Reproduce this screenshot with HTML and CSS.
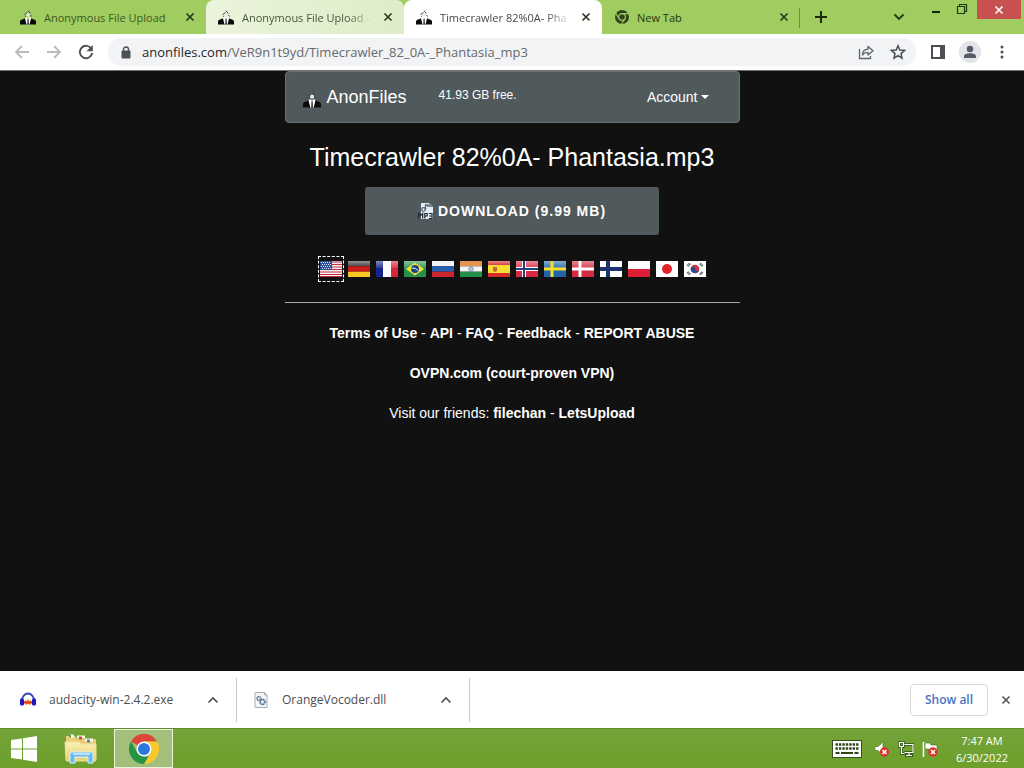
FILE: index.html
```html
<!DOCTYPE html>
<html lang="en">
<head>
<meta charset="utf-8">
<title>Timecrawler 82%0A- Phantasia.mp3 - AnonFiles</title>
<link rel="stylesheet" href="styles.css">
</head>
<body>
<svg class="defs" aria-hidden="true">
  <symbol id="anon" viewBox="0 0 16 16">
    <path d="M0 15.500v-3q0-1.500 2-2l4-1.500h4l4 1.500q2 .5 2 2v3z" fill="#080b08"/>
    <path d="M6 8l2 1 2-1 1 1.500-1.500 6h-3L5 9.500z" fill="#fff"/>
    <path d="M7.600 9.500h.9l.4 6H7.300z" fill="#222"/>
    <path d="M6 5l1.500-1.500L10 5l-.6 2.500H6.800z" fill="#e2e8e4"/>
    <path d="M4.500 5.500L7.500 3.500M9 3l1.500 1.500M10.500 6l1 1.500M8 1.500l1 1.500M5 7l1 .5" stroke="#414c45" stroke-width="1" fill="none"/>
  </symbol>
  <symbol id="x" viewBox="0 0 10 10"><path d="M1.500 1.500l7 7M8.500 1.500l-7 7" fill="none" stroke="currentColor" stroke-width="1.600"/></symbol>
  <symbol id="up" viewBox="0 0 12 8"><path d="M1.500 6.500L6 2l4.500 4.500" fill="none" stroke="currentColor" stroke-width="1.600"/></symbol>
  <symbol id="redx" viewBox="0 0 10 10"><circle cx="5" cy="5" r="4.700" fill="#d8362c"/><path d="M3 3l4 4M7 3L3 7" stroke="#fff" stroke-width="1.600"/></symbol>
  <linearGradient id="gloss" x2="0" y2="1"><stop offset="0" stop-color="#fff" stop-opacity=".45"/><stop offset="1" stop-color="#fff" stop-opacity=".1"/></linearGradient>
  <linearGradient id="folder" x2="0" y2="1"><stop offset="0" stop-color="#faf0b4"/><stop offset="1" stop-color="#e8cf72"/></linearGradient>
</svg>

<header class="tabstrip">
  <div class="tabs">
    <div class="tab first"><svg class="favicon"><use href="#anon"/></svg><span class="tab-title">Anonymous File Upload</span><button class="close" aria-label="Close tab"><svg><use href="#x"/></svg></button></div>
    <div class="tab hovered"><svg class="favicon"><use href="#anon"/></svg><span class="tab-title">Anonymous File Upload -</span><button class="close" aria-label="Close tab"><svg><use href="#x"/></svg></button></div>
    <div class="tab active"><svg class="favicon"><use href="#anon"/></svg><span class="tab-title">Timecrawler 82%0A- Pha</span><button class="close" aria-label="Close tab"><svg><use href="#x"/></svg></button></div>
    <div class="tab last"><svg class="favicon globe" viewBox="0 0 16 16"><circle cx="8" cy="8" r="7" fill="#2f4420"/><circle cx="8" cy="8" r="3.400" fill="none" stroke="#a1cc60" stroke-width="1.200"/><path d="M8 4.600h7M5 9.700L1.700 4M11 9.700L7.500 15" stroke="#a1cc60" stroke-width="1.100"/></svg><span class="tab-title">New Tab</span><button class="close" aria-label="Close tab"><svg><use href="#x"/></svg></button></div>
    <button class="newtab" aria-label="New tab"><svg viewBox="0 0 14 14"><path d="M7 1v12M1 7h12" stroke="#1c2b0c" stroke-width="2"/></svg></button>
  </div>
  <div class="window-controls">
    <button class="search-tabs" aria-label="Search tabs"><svg viewBox="0 0 12 8"><path d="M1.500 1.500L6 6l4.500-4.500" fill="none" stroke="#24360f" stroke-width="1.800"/></svg></button>
    <button class="win" aria-label="Minimize"><svg viewBox="0 0 12 12"><path d="M2 9h8" stroke="#16210a" stroke-width="2"/></svg></button>
    <button class="win" aria-label="Restore"><svg viewBox="0 0 12 12"><path d="M1.500 3.500h7v7h-7zM3.500 3V1.500h7v7H9" fill="none" stroke="#24360f" stroke-width="1.200"/></svg></button>
    <button class="win-close" aria-label="Close window"><svg><use href="#x"/></svg></button>
  </div>
</header>

<nav class="toolbar" aria-label="Browser">
  <button class="tool" aria-label="Back"><svg viewBox="0 0 16 16"><path d="M15 8H2M8 2L2 8l6 6" fill="none" stroke="#b9bbbe" stroke-width="1.800"/></svg></button>
  <button class="tool" aria-label="Forward"><svg viewBox="0 0 16 16"><path d="M1 8h13M8 2l6 6-6 6" fill="none" stroke="#b9bbbe" stroke-width="1.800"/></svg></button>
  <button class="tool" aria-label="Reload"><svg viewBox="0 0 16 16"><path d="M13.500 5A6.200 6.200 0 1 0 14.200 9" fill="none" stroke="#4c4f54" stroke-width="1.900"/><path d="M14.800 1v6.300H8.500z" fill="#4c4f54"/></svg></button>
  <div class="omnibox">
    <svg class="lock" viewBox="0 0 10 13"><rect x=".5" y="4.500" width="9" height="8" rx="1" fill="#4c4f54"/><path d="M2.500 5V3.500a2.500 2.500 0 0 1 5 0V5" fill="none" stroke="#4c4f54" stroke-width="1.400"/></svg>
    <a class="url" href="#"><span class="host">anonfiles.com</span>/VeR9n1t9yd/Timecrawler_82_0A-_Phantasia_mp3</a>
    <button class="tool" aria-label="Share"><svg viewBox="0 0 16 16"><path d="M1.500 5v9.500h11V12" fill="none" stroke="#5f6368" stroke-width="1.300"/><path d="M4.500 11c0-4 2-5.500 5.500-5.800V2.500l5 4.300-5 4.200V8.300C7 8.300 5.700 9 4.500 11z" fill="none" stroke="#5f6368" stroke-width="1.300" stroke-linejoin="round"/></svg></button>
    <button class="tool" aria-label="Bookmark"><svg viewBox="0 0 16 16"><path d="M8 1.800l1.800 4.300 4.700.4L11 9.600l1 4.600-4-2.500-4 2.500 1-4.600-3.500-3.100 4.700-.4z" fill="none" stroke="#4c4f54" stroke-width="1.500"/></svg></button>
  </div>
  <button class="tool" aria-label="Side panel"><svg viewBox="0 0 16 16"><path d="M1 1h14v14H1zM3 3v10h7V3z" fill="#4c4f54" fill-rule="evenodd"/></svg></button>
  <button class="tool avatar" aria-label="Profile"><svg viewBox="0 0 22 22"><circle cx="11" cy="11" r="11" fill="#e2e4ea"/><circle cx="11" cy="8" r="3.200" fill="#555b68"/><path d="M5 17v-1.500c0-2.500 3.500-3.200 6-3.200s6 .7 6 3.200V17z" fill="#555b68"/></svg></button>
  <button class="tool" aria-label="Menu"><svg viewBox="0 0 16 16" fill="#4c4f54"><circle cx="8" cy="3" r="1.500"/><circle cx="8" cy="8" r="1.500"/><circle cx="8" cy="13" r="1.500"/></svg></button>
</nav>

<main class="page">
  <div class="content">
    <div class="navbar">
      <a class="brand" href="#"><svg class="brand-icon"><use href="#anon"/></svg>AnonFiles</a>
      <span class="quota">41.93 GB free.</span>
      <button class="account">Account<span class="caret"></span></button>
    </div>
    <h1 class="filename">Timecrawler 82%0A- Phantasia.mp3</h1>
    <a class="download" href="#"><svg viewBox="0 0 15 16"><path d="M3 0h8l4 4v12H3z" fill="#e4edf4"/><path d="M11 0v4h4z" fill="#71838e"/><circle cx="5.500" cy="6.500" r="1.800" fill="none" stroke="#4d6272" stroke-width="1.200"/><path d="M7.500 6.500V2h2.500v2" stroke="#4d6272" stroke-width="1.300" fill="none"/><path d="M.7 15.500v-5l2 2 2-2v5M6.800 15.500v-5h2.400v2.500H7M10.800 10.500H14v5h-3.200M11 13h3" stroke="#1d2a34" stroke-width="1.200" fill="none"/></svg>Download (9.99 MB)</a>
    <div class="flags">
      <a class="flag selected" href="#" aria-label="English"><svg viewBox="0 0 22 16"><path d="M0 0h22v16H0z" fill="#f4eef0"/><path d="M0 1h22M0 3.500h22M0 6h22M0 8.500h22M0 11h22M0 13.500h22M0 15.500h22" stroke="#c32e43" stroke-width="1.200"/><path d="M0 0h12v9H0z" fill="#315197"/><path d="M1 1.500h10M2 3.500h9M1 5.500h10M2 7.500h9" stroke="#d6e1f4" stroke-width="1" stroke-dasharray="1 1"/></svg></a>
      <a class="flag" href="#" aria-label="Deutsch"><svg viewBox="0 0 22 16"><path d="M0 0h22v5.300H0z" fill="#3a3a3a"/><path d="M0 5.300h22v5.400H0z" fill="#cc1c18"/><path d="M0 10.700h22V16H0z" fill="#f8c726"/><path d="M0 0h22v5H0z" fill="url(#gloss)"/></svg></a>
      <a class="flag" href="#" aria-label="Français"><svg viewBox="0 0 22 16"><path d="M0 0h7v16H0z" fill="#18248b"/><path d="M7 0h8v16H7z" fill="#fff"/><path d="M15 0h7v16h-7z" fill="#d92636"/><path d="M0 0h22v7H0z" fill="url(#gloss)"/></svg></a>
      <a class="flag" href="#" aria-label="Português"><svg viewBox="0 0 22 16"><path d="M0 0h22v16H0z" fill="#26924b"/><path d="M0 0h22v7H0z" fill="url(#gloss)"/><path d="M11 1.500L20 8l-9 6.500L2 8z" fill="#f5e332"/><circle cx="11" cy="8" r="4" fill="#1e4686"/><path d="M7.300 7q4-.5 7 2.500" stroke="#dcebf5" fill="none"/></svg></a>
      <a class="flag" href="#" aria-label="Русский"><svg viewBox="0 0 22 16"><path d="M0 0h22v5.300H0z" fill="#f4f4f4"/><path d="M0 5.300h22v5.400H0z" fill="#255fb2"/><path d="M0 10.700h22V16H0z" fill="#cd252c"/></svg></a>
      <a class="flag" href="#" aria-label="हिन्दी"><svg viewBox="0 0 22 16"><path d="M0 0h22v5.300H0z" fill="#e99352"/><path d="M0 5.300h22v5.400H0z" fill="#f5f5f5"/><path d="M0 10.700h22V16H0z" fill="#23904a"/><circle cx="11" cy="8" r="2.200" fill="#b7c8df" stroke="#6c83a9" stroke-width=".8"/></svg></a>
      <a class="flag" href="#" aria-label="Español"><svg viewBox="0 0 22 16"><path d="M0 0h22v16H0z" fill="#d8292b"/><path d="M0 4h22v8H0z" fill="#f8dd35"/><path d="M0 0h22v4H0z" fill="url(#gloss)"/><path d="M5 6h4v4l-2 1-2-1z" fill="#c46636"/></svg></a>
      <a class="flag" href="#" aria-label="Norsk"><svg viewBox="0 0 22 16"><path d="M0 0h22v16H0z" fill="#d82b41"/><path d="M0 0h22v7H0z" fill="url(#gloss)"/><path d="M8 0v16M0 8h22" stroke="#fff" stroke-width="4"/><path d="M8 0v16M0 8h22" stroke="#233f7c" stroke-width="2"/></svg></a>
      <a class="flag" href="#" aria-label="Svenska"><svg viewBox="0 0 22 16"><path d="M0 0h22v16H0z" fill="#1f67a8"/><path d="M0 0h22v7H0z" fill="url(#gloss)"/><path d="M8 0v16M0 8h22" stroke="#f7df2c" stroke-width="3"/></svg></a>
      <a class="flag" href="#" aria-label="Dansk"><svg viewBox="0 0 22 16"><path d="M0 0h22v16H0z" fill="#d32b42"/><path d="M0 0h22v7H0z" fill="url(#gloss)"/><path d="M8 0v16M0 8h22" stroke="#fff" stroke-width="3"/></svg></a>
      <a class="flag" href="#" aria-label="Suomi"><svg viewBox="0 0 22 16"><path d="M0 0h22v16H0z" fill="#fff"/><path d="M8 0v16M0 8h22" stroke="#1e326f" stroke-width="4"/></svg></a>
      <a class="flag" href="#" aria-label="Polski"><svg viewBox="0 0 22 16"><path d="M0 0h22v8H0z" fill="#fff"/><path d="M0 8h22v8H0z" fill="#dc1f35"/></svg></a>
      <a class="flag" href="#" aria-label="日本語"><svg viewBox="0 0 22 16"><path d="M0 0h22v16H0z" fill="#fff"/><circle cx="11" cy="8" r="5" fill="#e02326"/></svg></a>
      <a class="flag" href="#" aria-label="한국어"><svg viewBox="0 0 22 16"><path d="M0 0h22v16H0z" fill="#fff"/><circle cx="11" cy="8" r="4.300" fill="#d63340"/><path d="M6.800 7a2.200 2.200 0 0 1 4.200 1 2.200 2.200 0 0 0 4.200.8A4.300 4.300 0 0 1 6.800 7z" fill="#244a91"/><path d="M3.500 5l2.500-2.500M3.500 11L6 13.500M16 2.500L18.500 5M16 13.500l2.500-2.500" stroke="#666" stroke-width="2.400" stroke-dasharray="1.500 .5"/></svg></a>
    </div>
    <footer class="links">
      <p><a href="#">Terms of Use</a> - <a href="#">API</a> - <a href="#">FAQ</a> - <a href="#">Feedback</a> - <a href="#">REPORT ABUSE</a></p>
      <p><a href="#">OVPN.com (court-proven VPN)</a></p>
      <p>Visit our friends: <a href="#">filechan</a> - <a href="#">LetsUpload</a></p>
    </footer>
  </div>
</main>

<section class="shelf" aria-label="Downloads">
  <div class="item"><svg class="file-icon" viewBox="0 0 16 16"><path d="M2 8.500a6 7 0 0 1 12 0" fill="none" stroke="#3d43bd" stroke-width="1.800"/><rect x="0" y="6.500" width="4" height="7" rx="1.500" fill="#2016c8"/><rect x="12" y="6.500" width="4" height="7" rx="1.500" fill="#2016c8"/><path d="M4 10l1-2 1.500 1L8 7l1.500 2L11 8l1 2-1 2-1 1-2-1-2 1z" fill="#f38b22"/><path d="M4 10.500h8" stroke="#d9351d" stroke-width="1.800"/></svg><span class="file-name">audacity-win-2.4.2.exe</span><button class="more" aria-label="Options for audacity-win-2.4.2.exe"><svg><use href="#up"/></svg></button></div>
  <div class="item"><svg class="file-icon" viewBox="0 0 16 16"><path d="M2 .5h9.500L14 3v12.500H2z" fill="#f3f7f9" stroke="#a5adb2"/><path d="M11.500.5V3H14" fill="none" stroke="#a5adb2"/><circle cx="6" cy="6.500" r="2" fill="#dce9f1" stroke="#4a6780" stroke-width="1.400" stroke-dasharray="1.300 .5"/><circle cx="9.500" cy="10" r="2.500" fill="#dce9f1" stroke="#4a6780" stroke-width="1.500" stroke-dasharray="1.500 .5"/></svg><span class="file-name">OrangeVocoder.dll</span><button class="more" aria-label="Options for OrangeVocoder.dll"><svg><use href="#up"/></svg></button></div>
  <div class="shelf-actions"><button class="show-all">Show all</button><button class="shelf-close" aria-label="Close downloads"><svg><use href="#x"/></svg></button></div>
</section>

<footer class="taskbar">
  <button class="start" aria-label="Start"><svg viewBox="0 0 26 26"><path d="M0 4l11-1.600V12.500H0zM12 2.200L26 0v12.500H12zM0 13.500h11v10L0 22zM12 13.500h14V26l-14-2.200z" fill="#fff"/></svg></button>
  <button class="explorer" aria-label="File Explorer"><svg viewBox="0 0 34 30"><path d="M2 2h9l2 3h18q1 0 1 1v20q0 1-1 1H3q-1 0-1-1z" fill="#e9cd79"/><path d="M5 2h5M13 3h8M21 6h8" stroke="#fffbea" stroke-width="3"/><path d="M5 2h2" stroke="#46a54f" stroke-width="3"/><path d="M15 4h3" stroke="#d34a35" stroke-width="3"/><path d="M23 7h3" stroke="#468dc8" stroke-width="3"/><path d="M1 8h14l2 2h15v16q0 1-1 1H3q-1 0-1-1z" fill="url(#folder)" stroke="#efe0a0"/><path d="M6 29V20q0-2 2-2h19q2 0 2 2v9h-5v-6H11v6z" fill="#6bbbe8" stroke="#d8f2fd"/><path d="M9 20h17" stroke="#d7f0fb" stroke-width="1.500"/></svg></button>
  <button class="running" aria-label="Google Chrome"><svg viewBox="0 0 30 30"><path d="M15 15L2 7.500A15 15 0 0 1 28 7.500H15z" fill="#dd4536"/><path d="M15 7.500h13A15 15 0 0 1 15 30l6.500-11.200z" fill="#f9c72e"/><path d="M2 7.500l6.500 11.300L15 22.500h4.400L15 30A15 15 0 0 1 2 7.500z" fill="#279347"/><circle cx="15" cy="15" r="7.500" fill="#fff"/><circle cx="15" cy="15" r="6" fill="#2d78dc"/></svg></button>
  <div class="tray">
    <svg class="keyboard" viewBox="0 0 30 18"><rect x=".5" y=".5" width="29" height="17" fill="#fff" stroke="#36521a"/><path d="M3.500 4.500h23M3.500 8.500h23" stroke="#2d4415" stroke-width="2.400" stroke-dasharray="2.400 1.034"/><path d="M3.500 13h4M9 13h12M22.500 13h4" stroke="#2d4415" stroke-width="2.200"/></svg>
    <svg class="tray-icon" viewBox="0 0 16 16"><path d="M1 5.500h3l5-4.500v13l-5-4.500H1z" fill="#fff" stroke="#466b20" stroke-width=".6"/><use href="#redx" x="5.500" y="6" width="10" height="10"/></svg>
    <svg class="tray-icon" viewBox="0 0 16 16"><path d="M6.500 3.500h9v8h-9M11 11.500V15M7 14.500h8M3.500 6v6.500h3M1.500 1.500h4v4h-4z" fill="none" stroke="#2d4b12" stroke-width="2.400"/><path d="M6.500 3.500h8.500v8H6.500M11 11.500V14M8 14.500h6M3.500 6v6.500h3M1.500 1.500h4v4h-4z" fill="none" stroke="#fff" stroke-width="1.200"/></svg>
    <svg class="tray-icon" viewBox="0 0 16 16"><path d="M1.500 1v15" stroke="#fff" stroke-width="1.600"/><path d="M3 2h5l1 2h6v6H8L7 8H3z" fill="#fff" stroke="#466b20" stroke-width=".6"/><use href="#redx" x="6" y="6" width="10" height="10"/></svg>
    <div class="clock"><span>7:47 AM</span><span>6/30/2022</span></div>
  </div>
</footer>
</body>
</html>
```
FILE: styles.css
```css
* { box-sizing: border-box; }

body {
  margin: 0;
  min-height: 100vh;
  display: flex;
  flex-direction: column;
  background: #111;
  font-family: "Open Sans", "Noto Sans", sans-serif;
  font-size: 12px;
}

button {
  display: flex;
  align-items: center;
  justify-content: center;
  padding: 0;
  border: 0;
  background: none;
  color: inherit;
  font: inherit;
}

a { color: inherit; text-decoration: none; }
svg { display: block; flex: none; }
.defs { position: absolute; width: 0; height: 0; }

/* Tab strip */
.tabstrip {
  display: flex;
  justify-content: space-between;
  height: 34px;
  background: #a1cc60;
  color: #24360f;
  font-size: 11px;
}
.tabs { display: flex; flex: 1; min-width: 0; padding-left: 8px; }
.tab {
  display: flex;
  align-items: center;
  flex: 0 1 198px;
  min-width: 0;
  padding: 0 8px 0 12px;
  border-radius: 8px 8px 0 0;
}
.tab.first { color: #3c5a20; }
.tab.hovered { background: linear-gradient(90deg, #eaf4dc, #deedc8); color: #48573c; }
.tab.active { background: #fff; color: #45494d; }
.tab.last { position: relative; }
.tab.last::after {
  content: "";
  position: absolute;
  top: 8px;
  right: 0;
  width: 1px;
  height: 20px;
  background: #6d8f3c;
}
.favicon { width: 16px; height: 16px; margin-right: 8px; }
.globe { margin-right: 7px; }
.tab-title {
  flex: 1;
  overflow: hidden;
  white-space: nowrap;
}
.tab.hovered .tab-title,
.tab.active .tab-title { mask-image: linear-gradient(90deg, #000 80%, transparent); }
.close { width: 16px; height: 16px; margin-left: 6px; color: #26331b; }
.close svg { width: 10px; height: 10px; }
.newtab { width: 28px; margin-left: 7px; }
.newtab svg { width: 14px; height: 14px; }
.window-controls { display: flex; align-items: flex-start; }
.search-tabs { width: 28px; height: 34px; margin-right: 10px; }
.search-tabs svg { width: 12px; height: 8px; }
.win { width: 26px; height: 18px; }
.win svg { width: 12px; height: 12px; }
.win-close { width: 44px; height: 19px; margin: 0 3px 0 2px; background: #c75050; color: #fff; }
.win-close svg { width: 10px; height: 10px; }

/* Toolbar */
.toolbar {
  display: flex;
  align-items: center;
  gap: 8px;
  height: 37px;
  padding: 0 10px;
  border-bottom: 1px solid #6e7071;
  background: #fff;
}
.tool { flex: none; width: 24px; height: 24px; }
.tool svg { width: 16px; height: 16px; }
.tool.avatar svg { width: 22px; height: 22px; }
.omnibox {
  display: flex;
  align-items: center;
  gap: 8px;
  flex: 1;
  min-width: 0;
  height: 28px;
  margin: 0 2px;
  padding: 0 6px 0 13px;
  border-radius: 14px;
  background: #f2f3f5;
}
.lock { width: 10px; height: 13px; margin-right: 3px; }
.url {
  flex: 1;
  overflow: hidden;
  white-space: nowrap;
  color: #66696d;
  font-size: 13px;
}
.host { color: #26282b; }

/* Page */
.page {
  flex: 1;
  padding: 0 16px;
  color: #fff;
  font-family: "Liberation Sans", Arial, sans-serif;
  font-size: 14px;
  line-height: 20px;
}
.content {
  display: flex;
  flex-direction: column;
  align-items: center;
  max-width: 455px;
  margin: 0 auto;
}
.navbar {
  display: flex;
  align-items: center;
  align-self: stretch;
  height: 52px;
  padding: 0 30px 0 17px;
  border: 1px solid #6b7375;
  border-radius: 4px;
  background: #50595b;
}
.brand { display: flex; align-items: center; gap: 6px; font-size: 18px; }
.brand-icon { width: 18px; height: 18px; margin-top: 4px; }
.quota { flex: 1; margin-left: 32px; padding-bottom: 4px; font-size: 12px; }
.account { gap: 3px; }
.caret {
  border: 4px solid transparent;
  border-top-color: #fff;
  border-bottom: 0;
}
.filename {
  margin: 16px 0 12px;
  font-size: 25px;
  font-weight: 400;
  line-height: 36px;
  text-align: center;
}
.download {
  display: flex;
  align-items: center;
  justify-content: center;
  gap: 5px;
  width: 100%;
  max-width: 294px;
  height: 48px;
  border-radius: 3px;
  background: #50595b;
  font-weight: 700;
  letter-spacing: 1px;
  text-transform: uppercase;
}
.download svg { width: 15px; height: 16px; }
.flags {
  display: flex;
  flex-wrap: wrap;
  justify-content: center;
  gap: 6px;
  margin: 26px 0 25px;
  padding-left: 2px;
}
.flag svg { width: 22px; height: 16px; }
.selected { position: relative; }
.selected::after {
  content: "";
  position: absolute;
  inset: -5px -2px;
  border: 1px dashed #fff;
}
.links {
  align-self: stretch;
  padding-top: 20px;
  border-top: 1px solid #a5a8a8;
  text-align: center;
}
.links p { margin: 0 0 20px; }
.links a { font-weight: 700; }

/* Download shelf */
.shelf {
  display: flex;
  align-items: center;
  height: 57px;
  background: #fff;
  color: #4a4d51;
}
.item {
  display: flex;
  align-items: center;
  width: 233px;
  height: 44px;
  padding: 0 16px;
  border-right: 1px solid #c6c8cb;
}
.item:first-child { width: 237px; padding-left: 20px; }
.file-icon { width: 16px; height: 16px; margin-right: 13px; }
.file-name { flex: 1; white-space: nowrap; }
.more { width: 14px; height: 24px; }
.more svg { width: 12px; height: 8px; }
.shelf-actions { display: flex; align-items: center; gap: 10px; margin-left: auto; padding-right: 10px; }
.show-all {
  width: 78px;
  height: 32px;
  border: 1px solid #d5d8dc;
  border-radius: 4px;
  color: #4773c4;
  font-weight: 600;
}
.shelf-close { width: 16px; height: 24px; color: #54575b; }
.shelf-close svg { width: 10px; height: 10px; }

/* Taskbar */
.taskbar {
  display: flex;
  align-items: center;
  height: 40px;
  border-top: 1px solid #638d2d;
  background: linear-gradient(#74a33a, #6d9f2a);
}
.start { width: 48px; height: 39px; }
.start svg { width: 26px; height: 26px; }
.explorer { width: 66px; height: 39px; }
.explorer svg { width: 34px; height: 30px; }
.running {
  width: 59px;
  height: 39px;
  border: 1px solid #eaf3dc;
  background: #a3bf7c;
}
.running svg { width: 30px; height: 30px; }
.tray { display: flex; align-items: center; gap: 8px; margin-left: auto; padding-right: 16px; color: #fff; }
.keyboard { width: 30px; height: 18px; margin-right: 4px; }
.tray-icon { width: 16px; height: 16px; }
.clock {
  display: flex;
  flex-direction: column;
  align-items: center;
  margin-left: 10px;
  font-size: 11px;
  line-height: 17px;
}
```
